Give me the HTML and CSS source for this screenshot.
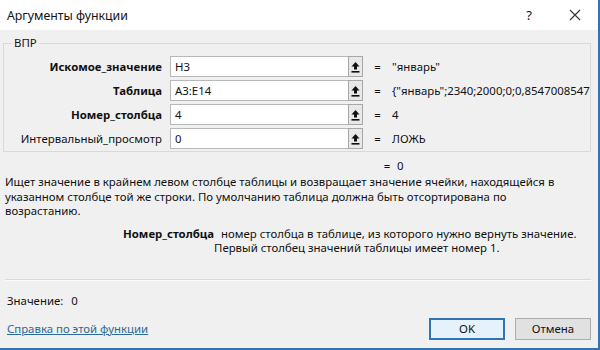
FILE: index.html
```html
<!DOCTYPE html>
<html lang="ru">
<head>
    <meta charset="utf-8">
    <title>Аргументы функции</title>
    <link rel="stylesheet" href="styles.css">
</head>
<body>
<div class="dialog">
    <div class="titlebar">
        <span class="title">Аргументы функции</span>
        <span class="help">?</span>
        <span class="close">
            <svg width="12" height="12" viewBox="0 0 12 12"><path d="M1 1 L11 11 M11 1 L1 11" stroke="#333" stroke-width="1.1" fill="none"/></svg>
        </span>
    </div>
    <div class="content">
        <fieldset class="group">
            <legend>ВПР</legend>
            <div class="args">
                <label class="arg-name bold">Искомое_значение</label>
                <input type="text" class="arg-input" value="H3">
                <span class="pick"><svg width="9" height="12" viewBox="0 0 9 12"><path d="M4.5 1 L8.5 5.5 H6 V8.5 H3 V5.5 H0.5 Z" fill="#111"/><rect x="0.5" y="10" width="8" height="1.6" fill="#111"/></svg></span>
                <span class="eq">=</span>
                <span class="arg-value">"январь"</span>

                <label class="arg-name bold">Таблица</label>
                <input type="text" class="arg-input" value="A3:E14">
                <span class="pick"><svg width="9" height="12" viewBox="0 0 9 12"><path d="M4.5 1 L8.5 5.5 H6 V8.5 H3 V5.5 H0.5 Z" fill="#111"/><rect x="0.5" y="10" width="8" height="1.6" fill="#111"/></svg></span>
                <span class="eq">=</span>
                <span class="arg-value">{"январь";2340;2000;0;0,854700854700855:"февраль"}</span>

                <label class="arg-name bold">Номер_столбца</label>
                <input type="text" class="arg-input" value="4">
                <span class="pick"><svg width="9" height="12" viewBox="0 0 9 12"><path d="M4.5 1 L8.5 5.5 H6 V8.5 H3 V5.5 H0.5 Z" fill="#111"/><rect x="0.5" y="10" width="8" height="1.6" fill="#111"/></svg></span>
                <span class="eq">=</span>
                <span class="arg-value">4</span>

                <label class="arg-name">Интервальный_просмотр</label>
                <input type="text" class="arg-input" value="0">
                <span class="pick"><svg width="9" height="12" viewBox="0 0 9 12"><path d="M4.5 1 L8.5 5.5 H6 V8.5 H3 V5.5 H0.5 Z" fill="#111"/><rect x="0.5" y="10" width="8" height="1.6" fill="#111"/></svg></span>
                <span class="eq">=</span>
                <span class="arg-value">ЛОЖЬ</span>
            </div>
        </fieldset>
        <div class="result"><span class="eq">=</span><span>0</span></div>
        <p class="desc">Ищет значение в крайнем левом столбце таблицы и возвращает значение ячейки, находящейся в<br>указанном столбце той же строки. По умолчанию таблица должна быть отсортирована по<br>возрастанию.</p>
        <div class="arg-help">
            <span class="bold">Номер_столбца</span>
            <p><span class="first">номер столбца в таблице, из которого нужно вернуть значение.</span><br>Первый столбец значений таблицы имеет номер 1.</p>
        </div>
        <hr class="sep">
        <div class="value-line">Значение:<span class="value-num">0</span></div>
        <div class="footer">
            <a href="#" class="help-link">Справка по этой функции</a>
            <button class="btn btn-ok">OK</button>
            <button class="btn">Отмена</button>
        </div>
    </div>
</div>
</body>
</html>
```

FILE: styles.css
```css
html, body{
    margin: 0;
    padding: 0;
    background-color: #f0f0f0;
}
.dialog{
    width: 598px;
    height: 348px;
    border-right: 2px solid #2f74b5;
    border-bottom: 2px solid #2f74b5;
    display: flex;
    flex-direction: column;
    overflow: hidden;
    background-color: #f0f0f0;
    font-family: "Noto Sans", "Open Sans", sans-serif;
    font-size: 11.4px;
    color: #111;
}
.titlebar{
    height: 30px;
    flex: none;
    background-color: #fff;
    display: flex;
    align-items: center;
    padding-left: 7px;
}
.title{
    font-size: 12.3px;
    flex: 1;
}
.help{
    font-size: 13px;
    width: 46px;
    text-align: center;
}
.close{
    width: 46px;
    height: 30px;
    display: flex;
    align-items: center;
    justify-content: center;
}
.content{
    flex: 1;
    display: flex;
    flex-direction: column;
    padding: 5px 7px 0 3px;
}
.group{
    margin: 0;
    padding: 0 0 2px 8px;
    border: 1px solid #d9d9d9;
}
.group legend{
    padding: 0 2px;
    line-height: 16px;
}
.args{
    display: grid;
    grid-template-columns: 158px 178px 15px 29px 1fr;
    grid-auto-rows: 21px;
    row-gap: 3px;
    margin-top: 5px;
    align-items: center;
}
.arg-name{
    text-align: right;
    padding-right: 8px;
}
.bold{
    font-weight: bold;
}
.arg-input{
    height: 21px;
    box-sizing: border-box;
    border: 1px solid #b8b8b8;
    border-right: none;
    font: inherit;
    padding: 0 4px;
    margin: 0;
    color: #111;
    background-color: #fff;
}
.pick{
    height: 21px;
    box-sizing: border-box;
    border: 1px solid #a8a8a8;
    background-color: #e8e8e8;
    display: flex;
    align-items: center;
    justify-content: center;
}
.eq{
    text-align: center;
}
.arg-value{
    white-space: nowrap;
    overflow: hidden;
}
.result{
    display: flex;
    padding-left: 374px;
    margin-top: 7px;
    line-height: 14px;
}
.result .eq{
    width: 20px;
}
.desc{
    margin: 2px 0 0 2px;
    line-height: 14.5px;
    white-space: nowrap;
}
.arg-help{
    display: flex;
    margin-top: 8px;
    padding-left: 120px;
    line-height: 14px;
    white-space: nowrap;
}
.arg-help p{
    margin: 0;
}
.arg-help p .first{
    padding-left: 7px;
}
.sep{
    margin: 24px 0 0 2px;
    border: none;
    border-top: 1px solid #d9d9d9;
    border-bottom: 1px solid #fbfbfb;
}
.value-line{
    margin: 13px 0 0 4px;
    line-height: 14px;
}
.value-num{
    margin-left: 8px;
}
.footer{
    display: flex;
    align-items: center;
    margin-top: 10px;
    padding-left: 4px;
}
.help-link{
    color: #2b6a9b;
    flex: 1;
}
.btn{
    width: 76px;
    height: 22px;
    font: inherit;
    color: #111;
    margin-left: 10px;
    border: 1px solid #adadad;
    background-color: #e1e1e1;
}
.btn-ok{
    border: 2px solid #2f74b5;
    background-color: #e5f1fb;
}
```
